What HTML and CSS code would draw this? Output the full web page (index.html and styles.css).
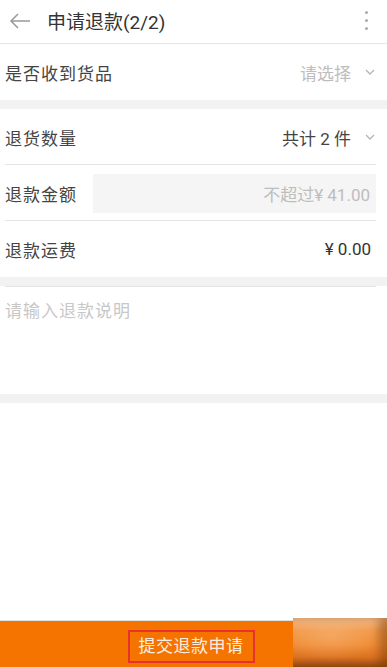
FILE: index.html
```html
<!DOCTYPE html>
<html lang="zh">
<head>
<meta charset="utf-8">
<title>申请退款</title>
<link rel="stylesheet" href="styles.css">
</head>
<body>
<div class="page">
  <header class="header">
    <svg class="back" width="22" height="16" viewBox="0 0 22 16"><path d="M21 8H2M9 1L2 8l7 7" fill="none" stroke="#999" stroke-width="1.5"/></svg>
    <h1 class="title">申请退款(2/2)</h1>
    <div class="kebab"><i></i><i></i><i></i></div>
  </header>

  <div class="group">
    <div class="row">
      <span class="label">是否收到货品</span>
      <span class="value placeholder">请选择</span>
      <svg class="chev" width="10" height="6" viewBox="0 0 10 6"><path d="M1 1l4 4 4-4" fill="none" stroke="#b5b5b5" stroke-width="1.3"/></svg>
    </div>
  </div>

  <div class="gap"></div>

  <div class="group">
    <div class="row bordered">
      <span class="label">退货数量</span>
      <span class="value">共计 2 件</span>
      <svg class="chev" width="10" height="6" viewBox="0 0 10 6"><path d="M1 1l4 4 4-4" fill="none" stroke="#b5b5b5" stroke-width="1.3"/></svg>
    </div>
    <div class="row bordered">
      <span class="label">退款金额</span>
      <div class="input">不超过¥ 41.00</div>
    </div>
    <div class="row">
      <span class="label">退款运费</span>
      <span class="value dark">¥ 0.00</span>
    </div>
  </div>

  <div class="gap"></div>

  <div class="note">
    <div class="note-text">请输入退款说明</div>
  </div>

  <div class="gap"></div>
</div>

<footer class="footer">
  <span class="submit">提交退款申请</span>
  <div class="blur"></div>
</footer>
</body>
</html>
```

FILE: styles.css
```css
* { box-sizing: border-box; }
html, body { margin: 0; padding: 0; }
body {
  background: #fff;
  font-family: Roboto, "Noto Sans CJK SC", sans-serif;
  color: #333;
  width: 387px;
  height: 667px;
  overflow: hidden;
  position: relative;
}
.header {
  height: 44px;
  display: flex;
  align-items: center;
  border-bottom: 1px solid #e6e6e6;
  padding: 0 0 2px 9px;
}
.back { display: block; flex: none; }
.title {
  margin: 0 0 0 16px;
  font-size: 19px;
  font-weight: normal;
  color: #333;
  flex: 1;
}
.kebab {
  width: 3px;
  margin-right: 19px;
  display: flex;
  flex-direction: column;
  gap: 5px;
}
.kebab i {
  display: block;
  width: 3px;
  height: 3px;
  background: #aaa;
  border-radius: 50%;
}
.group { background: #fff; }
.row {
  height: 56px;
  display: flex;
  align-items: center;
  padding: 0 11px 0 5px;
  font-size: 17px;
}
.row.bordered { position: relative; }
.row.bordered::after {
  content: "";
  position: absolute;
  left: 5px;
  right: 11px;
  bottom: 0;
  height: 1px;
  background: #e4e4e4;
}
.label { color: #444; letter-spacing: 1px; flex: none; }
.value { margin-left: auto; color: #444; }
.value.placeholder { color: #bdbdbd; }
.value.dark { color: #333; margin-right: 5px; }
.chev { margin-left: 14px; margin-right: 1px; flex: none; }
.input {
  margin-left: 16px;
  flex: 1;
  height: 39px;
  background: #f5f5f5;
  display: flex;
  align-items: center;
  justify-content: flex-end;
  padding-right: 6px;
  color: #bdbdbd;
  font-size: 17px;
}
.gap { height: 9px; background: #f2f2f2; }
.note {
  height: 108px;
  padding: 0 11px 0 5px;
}
.note-text {
  border-top: 1px solid #e4e4e4;
  padding-top: 10px;
  color: #c8c8c8;
  font-size: 17px;
  letter-spacing: 1px;
}
.footer {
  position: absolute;
  left: 0;
  right: 0;
  bottom: 0;
  height: 47px;
  background: #f57400;
  border-top: 1px solid #e0e0e0;
  display: flex;
  align-items: center;
  justify-content: center;
}
.submit {
  margin-left: -5px;
  margin-top: 4px;
  border: 2px solid #e8312a;
  padding: 2px 9px 3px 9px;
  color: #fbeee0;
  font-size: 17px;
  line-height: 24px;
  letter-spacing: 0.5px;
}
.blur {
  position: absolute;
  right: 0;
  top: -3px;
  width: 94px;
  height: 49px;
  background:
    radial-gradient(ellipse at 40% 35%, rgba(255,200,150,0.35), rgba(255,200,150,0) 60%),
    linear-gradient(to bottom, #f8c494 0%, #f09a4c 25%, #ef8c35 55%, #db7220 80%, #9a4c14 100%);
  box-shadow: inset -8px 0 10px rgba(110,50,0,0.45);
}
```
